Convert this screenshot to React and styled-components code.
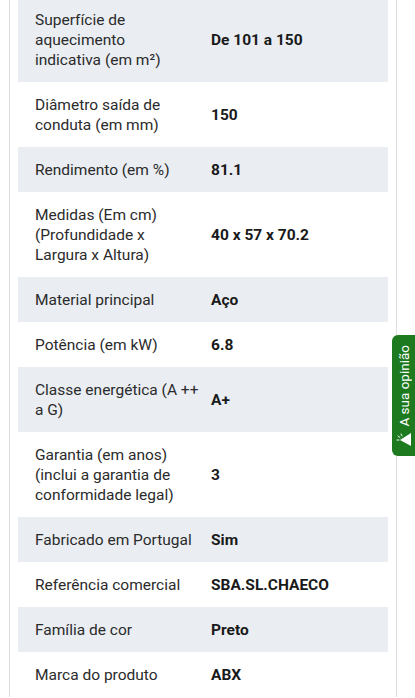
import React from 'react';
import styled, { createGlobalStyle } from 'styled-components';

const GlobalStyle = createGlobalStyle`
    body {
        margin: 0;
        background: #ffffff;
        font-family: Roboto, "Noto Sans", sans-serif;
        color: #222222;
    }
`;

// Styled Components

const Sheet = styled.div`
    margin: -3px 0 0 9px;
    width: 370px;
    padding: 0 8px;
    border-left: 1px solid #dedede;
    border-right: 1px solid #dedede;
`;

const Row = styled.div`
    display: grid;
    grid-template-columns: 164px 1fr;
    column-gap: 12px;
    align-items: center;
    padding: 12.5px 17px;
    background: ${props => (props.$shaded ? '#eaeef3' : '#ffffff')};
    font-size: 15.5px;
    line-height: 20px;
`;

const Label = styled.div`
    color: #2b2b2b;
    white-space: pre-line;
`;

const Value = styled.div`
    font-weight: 700;
    color: #1a1a1a;
`;

const FeedbackTab = styled.button`
    position: fixed;
    right: 0;
    top: 335px;
    width: 23px;
    height: 121px;
    padding: 0 0 9px;
    border: none;
    border-radius: 6px 0 0 6px;
    background: #1d7a1f;
    color: #ffffff;
    display: flex;
    flex-direction: column;
    align-items: center;
    justify-content: flex-end;
    gap: 4px;
    cursor: pointer;
`;

const TabText = styled.span`
    writing-mode: vertical-rl;
    transform: rotate(180deg);
    font-family: Roboto, sans-serif;
    font-size: 13.5px;
    line-height: 16px;
    white-space: nowrap;
`;

const specs = [
    ['Superfície de aquecimento\nindicativa (em m²)', 'De 101 a 150'],
    ['Diâmetro saída de conduta (em mm)', '150'],
    ['Rendimento (em %)', '81.1'],
    ['Medidas (Em cm) (Profundidade x Largura x Altura)', '40 x 57 x 70.2'],
    ['Material principal', 'Aço'],
    ['Potência (em kW)', '6.8'],
    ['Classe energética (A ++ a G)', 'A+'],
    ['Garantia (em anos) (inclui a garantia de conformidade legal)', '3'],
    ['Fabricado em Portugal', 'Sim'],
    ['Referência comercial', 'SBA.SL.CHAECO'],
    ['Família de cor', 'Preto'],
    ['Marca do produto', 'ABX'],
];

const FeedbackIcon = () => (
    <svg width="16" height="16" viewBox="0 0 16 16">
        <path d="M15 2 L4 9 L15 15 Z" fill="#ffffff" />
        <path d="M5 3 L6 5 M2 5 L4 6.5 M1 9 L3 9" stroke="#ffffff" strokeWidth="1" strokeLinecap="round" />
    </svg>
);

const App = () => {
    return (
        <>
            <GlobalStyle />
            <Sheet>
                {specs.map(([label, value], i) => (
                    <Row key={label} $shaded={i % 2 === 0}>
                        <Label>{label}</Label>
                        <Value>{value}</Value>
                    </Row>
                ))}
            </Sheet>
            <FeedbackTab>
                <TabText>A sua opinião</TabText>
                <FeedbackIcon />
            </FeedbackTab>
        </>
    );
};

export default App;
